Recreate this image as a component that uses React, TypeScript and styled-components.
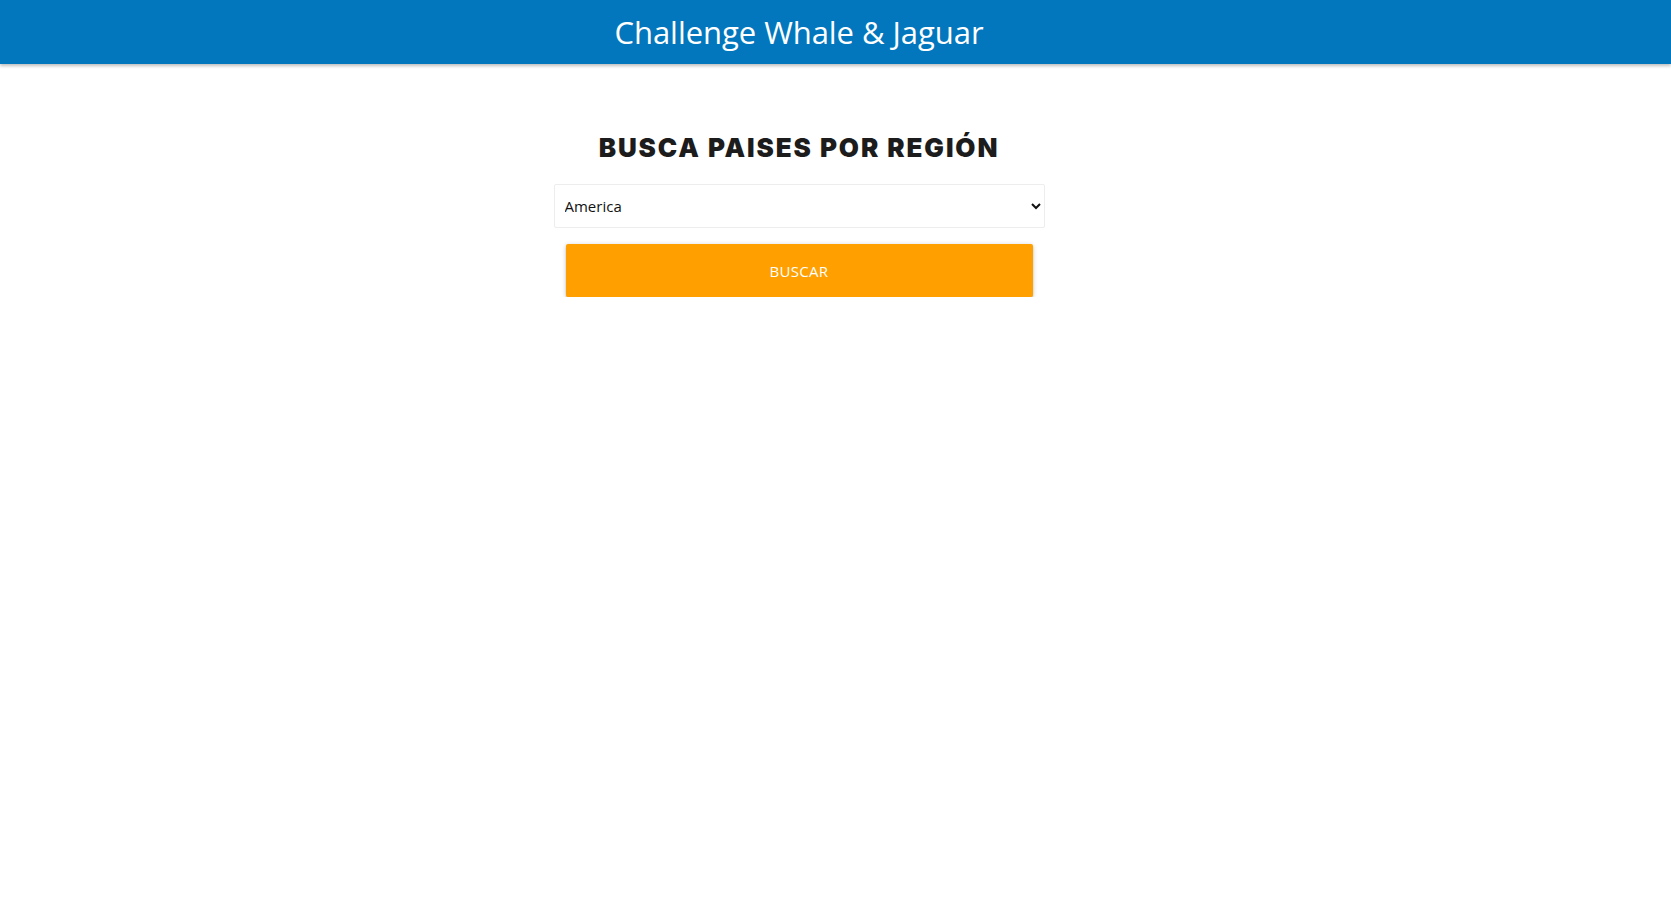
import React, { useState } from "react";
import styled, { createGlobalStyle } from "styled-components";

const Global = createGlobalStyle`
  html, body { margin: 0; padding: 0; background: #ffffff; }
  body { font-family: "Open Sans", "Noto Sans", sans-serif; }
`;

const Header = styled.header`
  height: 64px;
  background: #0277bd;
  box-shadow: 0 2px 3px rgba(0, 0, 0, 0.25);
  display: flex;
  align-items: center;
  justify-content: center;
  padding-right: 73px;
`;

const Brand = styled.h1`
  margin: 0;
  color: #ffffff;
  font-family: "Open Sans", "Noto Sans", sans-serif;
  font-weight: 400;
  font-size: 31px;
  letter-spacing: -0.05px;
`;

const Main = styled.main`
  display: flex;
  justify-content: center;
  padding-right: 73px;
  padding-top: 66px;
`;

const Panel = styled.section`
  width: 491px;
  display: flex;
  flex-direction: column;
  align-items: stretch;
`;

const Heading = styled.h2`
  margin: 0 0 18px;
  text-align: center;
  font-family: "Inter", "Lato", sans-serif;
  font-weight: 900;
  font-size: 26px;
  line-height: 36px;
  letter-spacing: 1.9px;
  color: #1c1c1c;
`;

const Select = styled.select`
  height: 44px;
  width: 100%;
  border: 1px solid #ededed;
  border-radius: 2px;
  background: #ffffff;
  padding: 0 6px 0 6px;
  font-family: "Open Sans", "Noto Sans", sans-serif;
  font-size: 15px;
  color: #111;
  outline: none;
`;

const Button = styled.button`
  margin: 16px 12px 0;
  height: 53px;
  border: none;
  border-radius: 2px;
  background: #ffa000;
  color: #ffffff;
  font-family: "Open Sans", "Noto Sans", sans-serif;
  font-size: 15px;
  letter-spacing: 0.3px;
  text-transform: uppercase;
  box-shadow: 0 2px 2px rgba(0, 0, 0, 0.14), 0 3px 1px -2px rgba(0, 0, 0, 0.12),
    0 1px 5px rgba(0, 0, 0, 0.2);
  cursor: pointer;
`;

export default function App() {
  const [region, setRegion] = useState("americas");
  return (
    <>
      <Global />
      <Header>
        <Brand>Challenge Whale &amp; Jaguar</Brand>
      </Header>
      <Main>
        <Panel>
          <Heading>BUSCA PAISES POR REGIÓN</Heading>
          <Select value={region} onChange={(e) => setRegion(e.target.value)}>
            <option value="africa">Africa</option>
            <option value="americas">America</option>
            <option value="asia">Asia</option>
            <option value="europe">Europa</option>
            <option value="oceania">Oceania</option>
          </Select>
          <Button>Buscar</Button>
        </Panel>
      </Main>
    </>
  );
}
